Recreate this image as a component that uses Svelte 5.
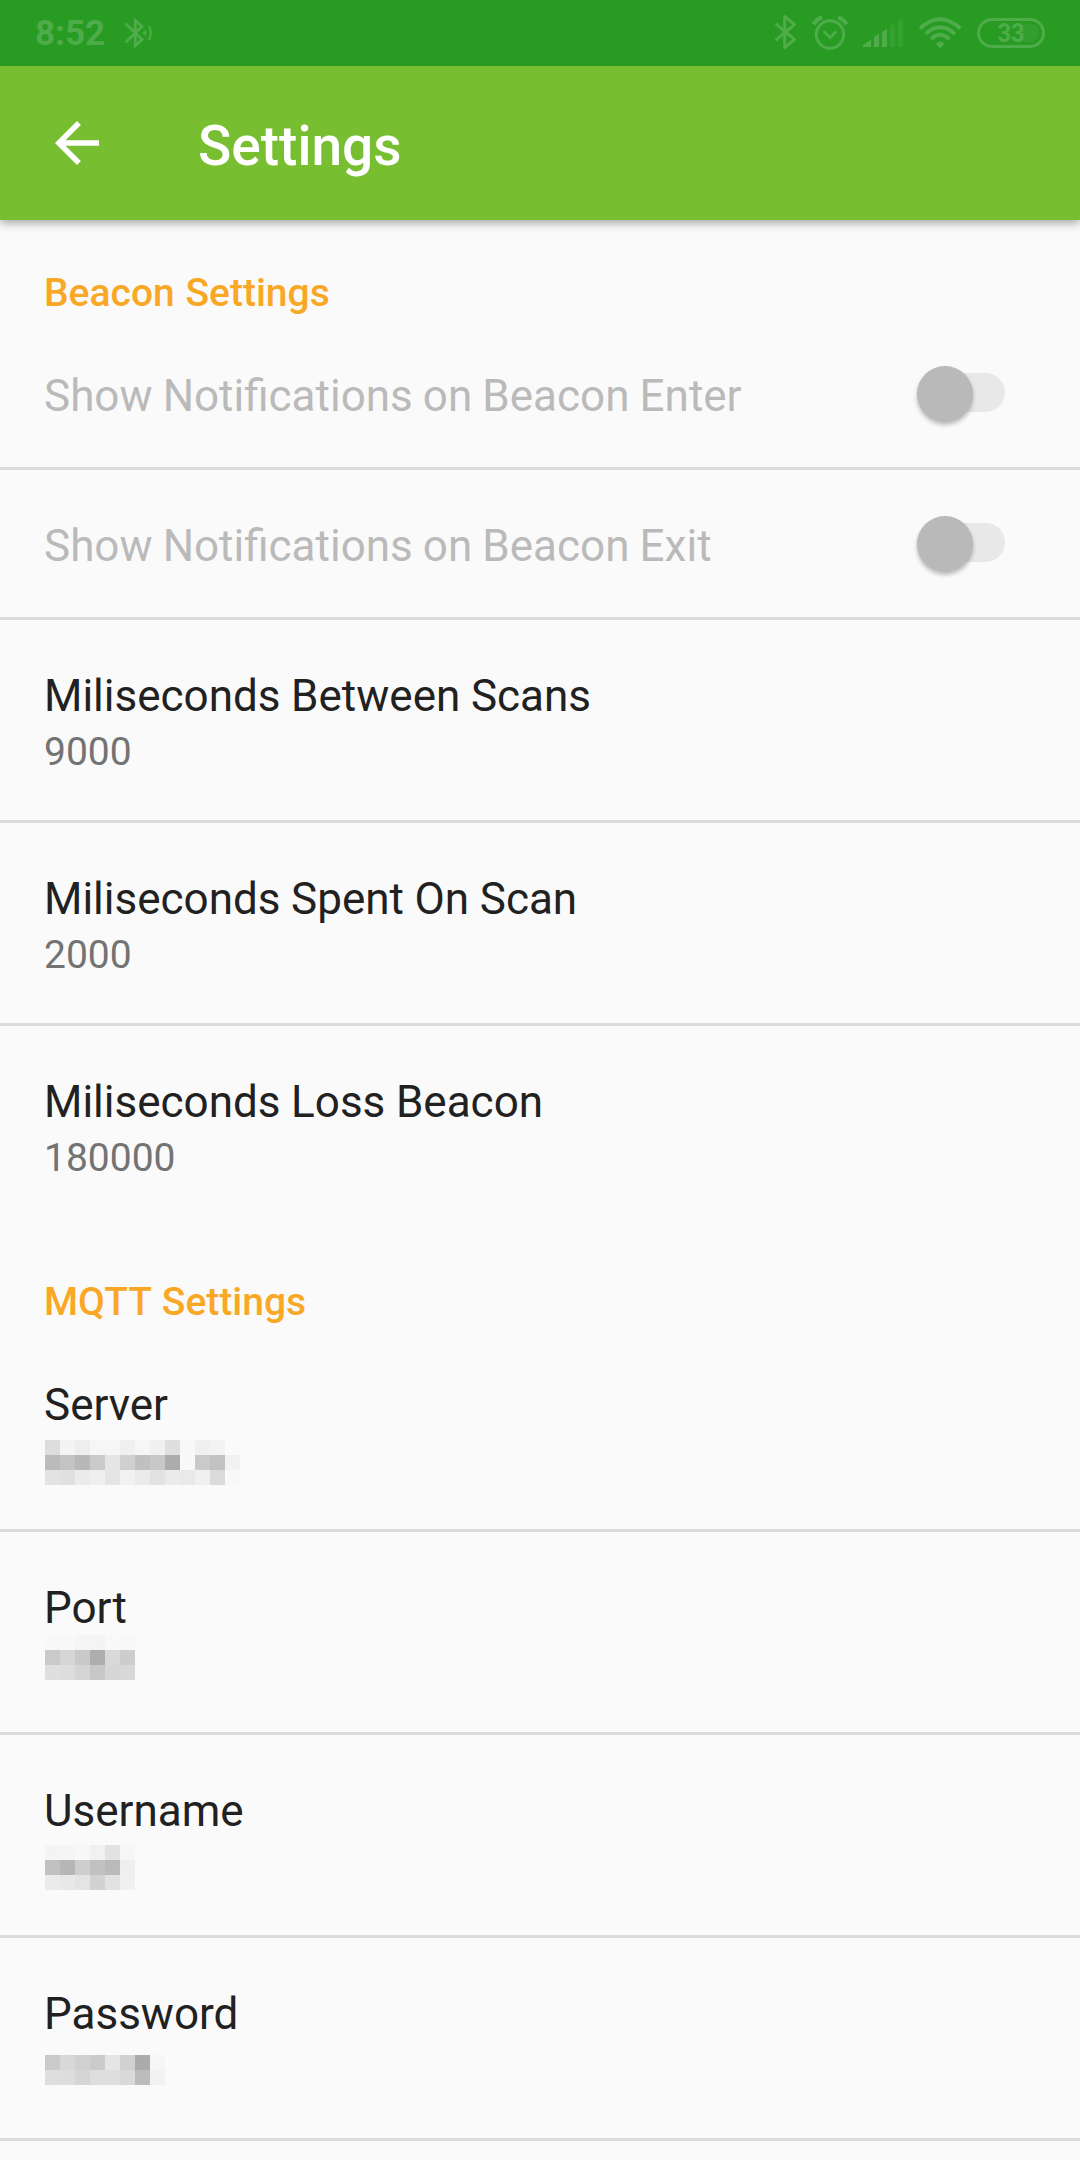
<script>
  const beacon = [
    { title: 'Show Notifications on Beacon Enter', toggle: true },
    { title: 'Show Notifications on Beacon Exit', toggle: true },
    { title: 'Miliseconds Between Scans', value: '9000' },
    { title: 'Miliseconds Spent On Scan', value: '2000' },
    { title: 'Miliseconds Loss Beacon', value: '180000' }
  ];

  // Grey levels of the masked values, one array per row of blocks.
  const mqtt = [
    {
      title: 'Server',
      kind: 'server',
      mask: [
        [221, 244, 238, 246, 246, 240, 246, 240, 223, 248, 240, 243, 250],
        [187, 196, 184, 202, 229, 208, 192, 200, 172, 249, 202, 194, 242],
        [227, 224, 235, 239, 229, 241, 235, 226, 235, 233, 240, 219, 248]
      ]
    },
    {
      title: 'Port',
      kind: 'port',
      mask: [
        [248, 248, 245, 244, 249, 248],
        [202, 214, 201, 174, 217, 205],
        [223, 221, 213, 199, 214, 216]
      ]
    },
    {
      title: 'Username',
      kind: 'username',
      mask: [
        [244, 245, 247, 241, 226, 246],
        [193, 182, 206, 193, 186, 239],
        [235, 232, 228, 210, 226, 240]
      ]
    },
    {
      title: 'Password',
      kind: 'password',
      mask: [
        [202, 216, 209, 203, 229, 209, 171, 246],
        [222, 221, 213, 222, 222, 217, 188, 242]
      ]
    }
  ];
</script>

<div class="screen">
  <header class="status">
    <div class="group">
      <span class="clock">8:52</span>
      <svg class="bt-active" width="30" height="32" viewBox="0 0 30 32" fill="none" stroke="currentColor" stroke-width="2.8">
        <path d="M1.500 6.500 18 22.500 11.300 28.500V3.500L18 9.500 1.500 25.500" />
        <path d="M25 9Q28.500 16 25 23" stroke-width="2.200" />
        <path d="M18.500 16 21.500 13Q23 16 21.500 19Z" fill="currentColor" stroke="none" />
      </svg>
    </div>
    <svg class="tray" width="275" height="40" viewBox="0 0 275 40" fill="none" stroke="currentColor">
      <path d="M2.500 13.500 20.500 28.500 10.700 36.500V5.500L20.500 13.500 2.500 28.500" stroke-width="3" stroke-linejoin="round" stroke-linecap="round" />
      <g stroke-width="3">
        <circle cx="56" cy="23.500" r="13.700" />
        <path d="M50.500 21 56 26.500 61.500 21" stroke-linecap="round" />
        <path d="M39.500 13.500Q42 8.500 48 6.500M64 6.500Q70 8.500 72.500 13.500" stroke-width="4" />
      </g>
      <g fill="currentColor" stroke="none">
        <path d="M89 36V34L97 28.500V36ZM100 36V26L105 22.500V36ZM108 36V21L113 17.500V36Z" />
        <path opacity=".35" d="M116 36V15L121 12V36ZM124 36V10L129 7V36Z" />
      </g>
      <g stroke-width="4">
        <path d="M146 17.500Q166 -1 186.500 17.500" />
        <path d="M151.500 23Q166 9.500 181 23" />
        <path d="M157 28Q166 19.500 175.500 28" />
        <path d="M162 33Q166 28 170.500 33L166.300 37.500Z" fill="currentColor" stroke="none" />
      </g>
      <rect x="204.500" y="8.500" width="65" height="27" rx="13.500" stroke-width="3" />
      <path d="M248 13H256A9 9 0 0 1 256 31H248Z" fill="currentColor" stroke="none" opacity=".25" />
      <text x="223.500" y="31" font-size="25" textLength="27" lengthAdjust="spacingAndGlyphs" fill="currentColor" stroke="none">33</text>
    </svg>
  </header>

  <div class="toolbar">
    <svg class="back" width="66" height="66" viewBox="0 0 24 24" fill="#fff">
      <path d="M20 11H7.830l5.590-5.590L12 4l-8 8 8 8 1.410-1.410L7.830 13H20v-2z" />
    </svg>
    <h1>Settings</h1>
  </div>

  <main>
    <h2>Beacon Settings</h2>
    {#each beacon as item}
      <section class="row" class:disabled={item.toggle}>
        <div class="title">{item.title}</div>
        {#if item.toggle}
          <div class="track"><div class="thumb"></div></div>
        {:else}
          <div class="value">{item.value}</div>
        {/if}
      </section>
    {/each}

    <h2>MQTT Settings</h2>
    {#each mqtt as item}
      <section class="row">
        <div class="title">{item.title}</div>
        <div class="mask {item.kind}">
          {#each item.mask as line}
            <div class="line">
              {#each line as level}
                <i style:background="rgb({level},{level},{level})"></i>
              {/each}
            </div>
          {/each}
        </div>
      </section>
    {/each}
  </main>
</div>

<style>
  :global(body) { background: #fafafa; }
  .screen {
    width: 1080px;
    height: 2160px;
    overflow: hidden;
    background: #fafafa;
    font-family: Roboto, sans-serif;
    color: #212121;
  }
  .status {
    height: 66px;
    box-sizing: border-box;
    display: flex;
    justify-content: space-between;
    padding: 0 31px 0 35px;
    background: #289b23;
    color: #4eac4a;
  }
  .group { display: flex; }
  .clock {
    font-size: 35px;
    line-height: 68px;
    font-weight: 700;
    width: 89px;
  }
  .bt-active { margin-top: 17px; }
  .tray { margin-top: 11px; font-weight: 700; }
  .toolbar {
    height: 154px;
    display: flex;
    align-items: center;
    background: #77be30;
    box-shadow: 0 3px 9px rgba(0, 0, 0, 0.35);
    clip-path: inset(0 0 -20px 0);
  }
  .back { margin-left: 44px; }
  h1 {
    margin: 6px 0 0 88px;
    color: #fff;
    font-size: 55px;
    line-height: 64px;
    font-weight: 500;
  }
  h2 {
    margin: 0;
    height: 100px;
    padding-top: 50px;
    box-sizing: border-box;
    font-size: 39px;
    line-height: 46px;
    font-weight: 500;
    color: #f9a825;
    padding-left: 44px;
    word-spacing: 1px;
  }
  .row {
    height: 203px;
    box-sizing: border-box;
    padding: 46px 44px 0;
    border-bottom: 3px solid #dbdbdb;
  }
  .row:has(+ h2) { border-color: transparent; }
  .title { font-size: 44px; line-height: 60px; word-spacing: -0.3px; }
  .value { font-size: 39px; line-height: 52px; color: #737373; }
  .disabled {
    height: 150px;
    padding: 5px 75px 0 44px;
    display: flex;
    align-items: center;
    justify-content: space-between;
    color: #bababa;
  }
  .disabled .title { word-spacing: -0.8px; }
  .track {
    width: 76px;
    height: 39px;
    margin-bottom: 7px;
    border-radius: 20px;
    background: #e8e8e8;
    display: flex;
    align-items: center;
  }
  .thumb {
    width: 56px;
    height: 56px;
    flex: none;
    margin: 2px 0 0 -12px;
    border-radius: 50%;
    background: #b9b9b9;
    box-shadow: 0 3px 4px rgba(0, 0, 0, 0.25);
  }
  .mask { margin-left: 1px; }
  .line { display: flex; }
  .line i { width: 15px; height: 15px; }
  .server { margin-top: 5px; }
  .port { margin-top: -3px; }
  .username { margin-top: 4px; }
  .password { margin-top: 11px; }
</style>
